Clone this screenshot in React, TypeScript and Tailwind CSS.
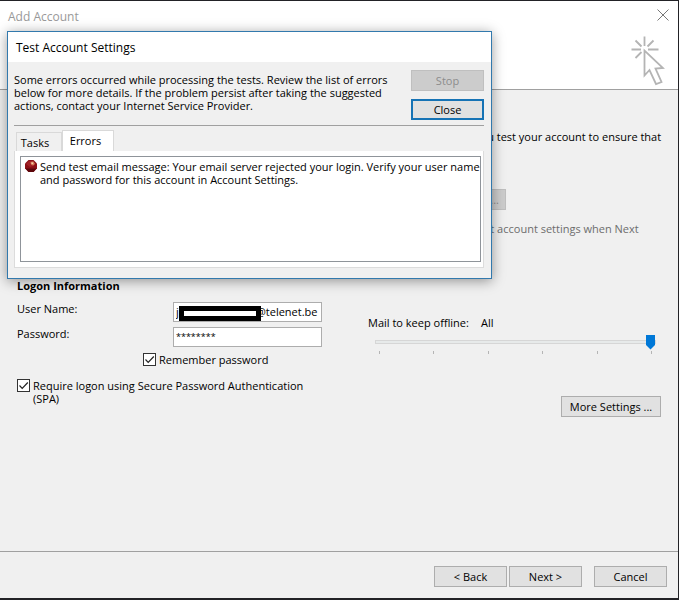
import { useState } from 'react'
import type { ButtonHTMLAttributes, InputHTMLAttributes, ReactNode } from 'react'
import clsx from 'clsx'

const TICKS = [0, 1, 2, 3, 4, 5]

const TABS = [
  { id: 'tasks', label: 'Tasks' },
  { id: 'errors', label: 'Errors' },
]

const ERRORS = [
  'Send test email message: Your email server rejected your login. Verify your user name and password for this account in Account Settings.',
]

// the middle of the address is hidden behind the redaction bar
const USER_NAME = `j${'\u00a0'.repeat(27)}@telenet.be`

type ButtonProps = ButtonHTMLAttributes<HTMLButtonElement> & { primary?: boolean }

function Button({ primary, className, ...props }: ButtonProps) {
  return (
    <button
      type="button"
      className={clsx(
        'h-[21px] shrink-0 whitespace-nowrap bg-[#e1e1e1] text-center disabled:border-[#bfbfbf] disabled:bg-[#cccccc] disabled:text-[#8c8c8c]',
        primary ? 'border-2 border-[#1673b5]' : 'border border-[#adadad]',
        className,
      )}
      {...props}
    />
  )
}

function Checkbox({ children, ...props }: InputHTMLAttributes<HTMLInputElement> & { children: ReactNode }) {
  return (
    <label className="flex items-start gap-[3px]">
      <span className="relative size-[13px] shrink-0">
        <input
          type="checkbox"
          className="peer block size-[13px] appearance-none border border-[#333333] bg-white"
          {...props}
        />
        <svg
          viewBox="0 0 13 13"
          className="pointer-events-none absolute inset-0 hidden size-[13px] peer-checked:block"
          fill="none"
          stroke="#222"
          strokeWidth="1.2"
        >
          <path d="M2.5 6.5 5.2 9.3 10.8 3.5" />
        </svg>
      </span>
      <span>{children}</span>
    </label>
  )
}

function ClickIcon() {
  return (
    <svg viewBox="0 0 34 50" className="h-[50px] w-[34px]" fill="none" stroke="#b4b4b4" strokeWidth="1.8">
      <path d="M13.500 .5V10M.5 13.500H10M17 13.500H27.500M4.500 4.500 10.500 10.500M22.500 4.500 16.500 10.500M4.500 22 10.500 16" />
      <path d="M13.500 14.500V39.500L18.500 34 25 48 30.500 46 24.500 32.500 32 32Z" strokeLinejoin="miter" />
    </svg>
  )
}

function ErrorIcon() {
  return (
    <svg viewBox="0 0 12 12" className="size-3 shrink-0">
      <path d="M3.500 0h5L12 3.500v5L8.500 12h-5L0 8.500v-5Z" fill="#8c1016" />
      <path d="M1 4 4 1h4l1 5-4 1Z" fill="#a32226" />
      <path d="M.5 8.500h11L8.500 12h-5Z" fill="#5c060b" />
      <path d="M5.500 2 8.500 1.500 10 4 8 5.500 6 4.500Z" fill="#d9825c" />
      <path d="M6.500 2.500h1.500v1.500H6.500Z" fill="#f3cfae" />
    </svg>
  )
}

function TestSettingsDialog() {
  const [tab, setTab] = useState('errors')

  return (
    <section
      role="dialog"
      aria-labelledby="test-title"
      className="absolute left-[7px] top-[30px] w-[485px] border border-[#3279ad] bg-[#f0f0f0] shadow-[0_2px_12px_rgba(0,0,0,0.4)]"
    >
      <h2 id="test-title" className="flex h-[30px] items-center bg-white px-2 text-[12px]">
        Test Account Settings
      </h2>

      <div className="pb-[10px] pl-[6px] pr-[7px] pt-2">
        <div className="flex justify-between border-b border-[#a0a0a0] pb-[5px]">
          <p className="w-[380px] pt-[3px]">
            Some errors occurred while processing the tests. Review the list of errors below for more
            details. If the problem persist after taking the suggested actions, contact your Internet
            Service Provider.
          </p>
          <div className="flex w-[73px] flex-col gap-2">
            <Button disabled>Stop</Button>
            <Button primary>Close</Button>
          </div>
        </div>

        <div role="tablist" className="flex items-end px-[2px] pt-1">
          {TABS.map(({ id, label }) => (
            <button
              key={id}
              type="button"
              role="tab"
              aria-selected={tab === id}
              onClick={() => setTab(id)}
              className={clsx(
                'border border-b-0 border-[#d9d9d9]',
                tab === id ? 'h-[21px] w-[52px] bg-white pb-[2px] pr-[5px]' : 'h-[19px] w-[46px] bg-[#f0f0f0] pr-2',
              )}
            >
              {label}
            </button>
          ))}
        </div>
        <div role="tabpanel" className="border border-t-0 border-[#dcdcdc] bg-white py-[5px] pl-[5px] pr-[2px]">
          <ul className="h-[106px] border border-[#8f949a] pl-1 pt-[3px]">
            {tab === 'errors' &&
              ERRORS.map((text) => (
                <li key={text} className="flex gap-[3px]">
                  <ErrorIcon />
                  <span>{text}</span>
                </li>
              ))}
          </ul>
        </div>
      </div>
    </section>
  )
}

export default function App() {
  return (
    <div className="flex min-h-screen flex-col bg-white pb-[15px] pr-[15px] font-['Open_Sans',sans-serif] text-[11px] leading-[13px] text-black">
      <main className="relative flex flex-1 flex-col border-b-2 border-r border-t border-[#222226] bg-[#f0f0f0]">
        {/* Title bar */}
        <header className="flex h-[89px] justify-between border-b border-[#a0a0a0] bg-white pl-2 pr-[9px] pt-2">
          <h1 className="text-[12px] leading-[15px] text-[#999999]">Add Account</h1>
          <div className="flex flex-col items-end gap-[15px]">
            <button type="button" aria-label="Close window" className="size-3">
              <svg viewBox="0 0 12 12" className="size-3" stroke="#777" fill="none">
                <path d="M.5 .5 11.500 11.500M11.500 .5 .5 11.500" />
              </svg>
            </button>
            <div className="pr-1">
              <ClickIcon />
            </div>
          </div>
        </header>

        <div className="flex flex-1 items-start justify-between pl-[17px] pr-[17px]">
          {/* Logon */}
          <form className="w-[305px] pt-[189px]">
            <h3 className="font-bold">Logon Information</h3>
            <div className="flex justify-between pt-[10px]">
              <label htmlFor="user">User Name:</label>
              <div className="relative">
                <input
                  id="user"
                  defaultValue={USER_NAME}
                  className="block h-5 w-[149px] border border-[#adadad] bg-white px-[2px] pb-[2px]"
                />
                <span className="absolute left-[6px] top-1 h-[15px] w-[82px] border-[5px] border-black bg-white" />
              </div>
            </div>
            <div className="flex justify-between pt-[5px]">
              <label htmlFor="password">Password:</label>
              <input
                id="password"
                defaultValue="********"
                className="block h-5 w-[149px] border border-[#adadad] bg-white px-[2px] pb-[2px] text-[9px]"
              />
            </div>
            <div className="pl-[126px] pt-[6px]">
              <Checkbox defaultChecked>Remember password</Checkbox>
            </div>
            <div className="pt-[13px]">
              <Checkbox defaultChecked>Require logon using Secure Password Authentication (SPA)</Checkbox>
            </div>
          </form>

          {/* Test + offline settings */}
          <div className="flex w-[293px] flex-col pt-10">
            <p className="whitespace-nowrap pl-[107px]">you test your account to ensure that</p>
            <Button disabled className="mt-[46px] w-[138px] pr-[6px] text-right">
              Test Account Settings ...
            </Button>
            <p className="whitespace-nowrap pl-[107px] pt-3 text-[#6d6d6d]">
              test account settings when Next
            </p>

            <div className="flex gap-3 pt-[81px]">
              <label htmlFor="offline">Mail to keep offline:</label>
              <output htmlFor="offline">All</output>
            </div>
            <div className="pl-[7px] pr-[5px] pt-[5px]">
              <input
                id="offline"
                type="range"
                min={0}
                max={5}
                defaultValue={5}
                className="block h-[15px] w-full appearance-none bg-transparent [&::-webkit-slider-runnable-track]:h-1 [&::-webkit-slider-runnable-track]:border [&::-webkit-slider-runnable-track]:border-[#d6d6d6] [&::-webkit-slider-runnable-track]:bg-[#e7eaea] [&::-webkit-slider-thumb]:-mt-[6px] [&::-webkit-slider-thumb]:h-[15px] [&::-webkit-slider-thumb]:w-[9px] [&::-webkit-slider-thumb]:appearance-none [&::-webkit-slider-thumb]:bg-[#0078d7] [&::-webkit-slider-thumb]:[clip-path:polygon(0_0,100%_0,100%_70%,50%_100%,0_70%)]"
              />
              <div className="flex justify-between px-1 pt-[2px]">
                {TICKS.map((tick) => (
                  <span key={tick} className="h-[3px] w-px bg-[#b5b5b5]" />
                ))}
              </div>
            </div>
            <Button className="mt-[42px] w-[100px] self-end">More Settings ...</Button>
          </div>
        </div>

        <footer className="flex h-[47px] justify-end border-t border-[#a0a0a0] pr-[11px] pt-[14px]">
          <Button className="mr-[2px] w-[73px]">&lt; Back</Button>
          <Button className="mr-3 w-[73px]">Next &gt;</Button>
          <Button className="w-[73px]">Cancel</Button>
        </footer>

        <TestSettingsDialog />
      </main>
    </div>
  )
}
